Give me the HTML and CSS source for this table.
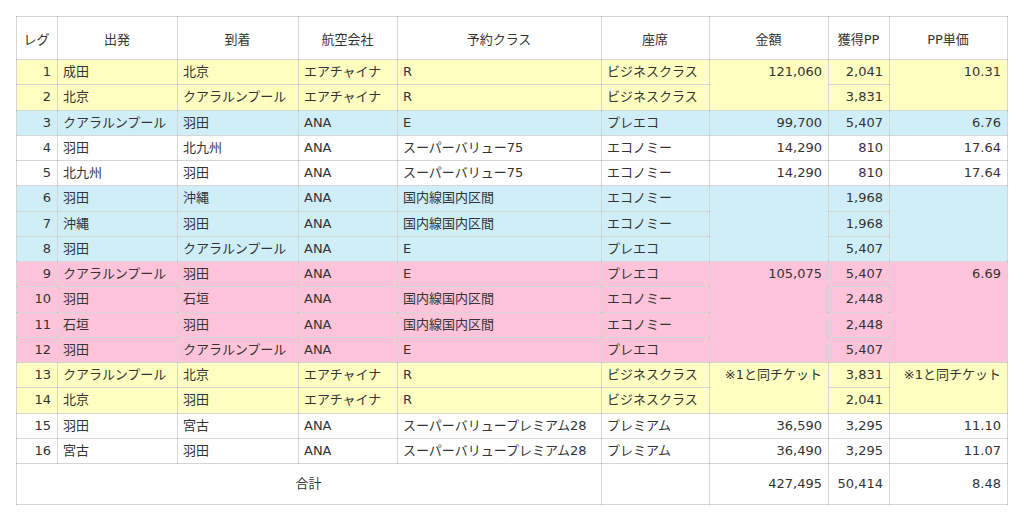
FILE: index.html
```html
<!DOCTYPE html>
<html lang="ja">
<head>
<meta charset="utf-8">
<link rel="stylesheet" href="styles.css">
</head>
<body>
<table class="pp">
<colgroup>
<col class="c1"><col class="c2"><col class="c3"><col class="c4"><col class="c5"><col class="c6"><col class="c7"><col class="c8"><col class="c9">
</colgroup>
<thead>
<tr><th>レグ</th><th>出発</th><th>到着</th><th>航空会社</th><th>予約クラス</th><th>座席</th><th>金額</th><th>獲得PP</th><th>PP単価</th></tr>
</thead>
<tbody>
<tr class="y"><td class="n">1</td><td>成田</td><td>北京</td><td>エアチャイナ</td><td>R</td><td>ビジネスクラス</td><td class="n" rowspan="2">121,060</td><td class="n">2,041</td><td class="n" rowspan="2">10.31</td></tr>
<tr class="y"><td class="n">2</td><td>北京</td><td>クアラルンプール</td><td>エアチャイナ</td><td>R</td><td>ビジネスクラス</td><td class="n">3,831</td></tr>
<tr class="b"><td class="n">3</td><td>クアラルンプール</td><td>羽田</td><td>ANA</td><td>E</td><td>プレエコ</td><td class="n">99,700</td><td class="n">5,407</td><td class="n">6.76</td></tr>
<tr><td class="n">4</td><td>羽田</td><td>北九州</td><td>ANA</td><td>スーパーバリュー75</td><td>エコノミー</td><td class="n">14,290</td><td class="n">810</td><td class="n">17.64</td></tr>
<tr><td class="n">5</td><td>北九州</td><td>羽田</td><td>ANA</td><td>スーパーバリュー75</td><td>エコノミー</td><td class="n">14,290</td><td class="n">810</td><td class="n">17.64</td></tr>
<tr class="b"><td class="n">6</td><td>羽田</td><td>沖縄</td><td>ANA</td><td>国内線国内区間</td><td>エコノミー</td><td class="n" rowspan="3"></td><td class="n">1,968</td><td class="n" rowspan="3"></td></tr>
<tr class="b"><td class="n">7</td><td>沖縄</td><td>羽田</td><td>ANA</td><td>国内線国内区間</td><td>エコノミー</td><td class="n">1,968</td></tr>
<tr class="b"><td class="n">8</td><td>羽田</td><td>クアラルンプール</td><td>ANA</td><td>E</td><td>プレエコ</td><td class="n">5,407</td></tr>
<tr class="p"><td class="n">9</td><td>クアラルンプール</td><td>羽田</td><td>ANA</td><td>E</td><td>プレエコ</td><td class="n" rowspan="4">105,075</td><td class="n">5,407</td><td class="n" rowspan="4">6.69</td></tr>
<tr class="p"><td class="n">10</td><td>羽田</td><td>石垣</td><td>ANA</td><td>国内線国内区間</td><td>エコノミー</td><td class="n">2,448</td></tr>
<tr class="p"><td class="n">11</td><td>石垣</td><td>羽田</td><td>ANA</td><td>国内線国内区間</td><td>エコノミー</td><td class="n">2,448</td></tr>
<tr class="p"><td class="n">12</td><td>羽田</td><td>クアラルンプール</td><td>ANA</td><td>E</td><td>プレエコ</td><td class="n">5,407</td></tr>
<tr class="y"><td class="n">13</td><td>クアラルンプール</td><td>北京</td><td>エアチャイナ</td><td>R</td><td>ビジネスクラス</td><td class="n" rowspan="2">※1と同チケット</td><td class="n">3,831</td><td class="n" rowspan="2">※1と同チケット</td></tr>
<tr class="y"><td class="n">14</td><td>北京</td><td>羽田</td><td>エアチャイナ</td><td>R</td><td>ビジネスクラス</td><td class="n">2,041</td></tr>
<tr><td class="n">15</td><td>羽田</td><td>宮古</td><td>ANA</td><td>スーパーバリュープレミアム28</td><td>プレミアム</td><td class="n">36,590</td><td class="n">3,295</td><td class="n">11.10</td></tr>
<tr><td class="n">16</td><td>宮古</td><td>羽田</td><td>ANA</td><td>スーパーバリュープレミアム28</td><td>プレミアム</td><td class="n">36,490</td><td class="n">3,295</td><td class="n">11.07</td></tr>
</tbody>
<tfoot>
<tr class="total"><td colspan="5" class="c">合計</td><td></td><td class="n">427,495</td><td class="n">50,414</td><td class="n">8.48</td></tr>
</tfoot>
</table>
</body>
</html>
```
FILE: styles.css
```css
html, body {
  margin: 0;
  padding: 0;
  background: #ffffff;
}
body {
  padding: 16px 0 0 16px;
  font-family: "DejaVu Sans", "Noto Sans CJK JP", sans-serif;
  font-size: 13px;
  color: #333333;
}
.pp {
  border-collapse: collapse;
  table-layout: fixed;
  width: 991px;
}
.c1 { width: 41px; }
.c2 { width: 120px; }
.c3 { width: 121px; }
.c4 { width: 99px; }
.c5 { width: 204px; }
.c6 { width: 108px; }
.c7 { width: 119px; }
.c8 { width: 61px; }
.c9 { width: 118px; }
.pp th, .pp td {
  border: 1px solid rgba(0, 0, 0, 0.16);
  padding: 0 6px 0 5px;
  white-space: nowrap;
  overflow: hidden;
}
.pp th {
  font-weight: normal;
  height: 42px;
  text-align: center;
  vertical-align: middle;
}
.pp td {
  height: 24.25px;
  line-height: 24.25px;
  vertical-align: top;
  text-align: left;
}
.pp td.n { text-align: right; }
.pp td.c { text-align: center; }
.y td { background: #ffffc1; }
.b td { background: #d0eef8; }
.p td { background: #ffc4d9; }
.total td {
  height: 40px;
  line-height: 40px;
  background: #ffffff;
}
```
